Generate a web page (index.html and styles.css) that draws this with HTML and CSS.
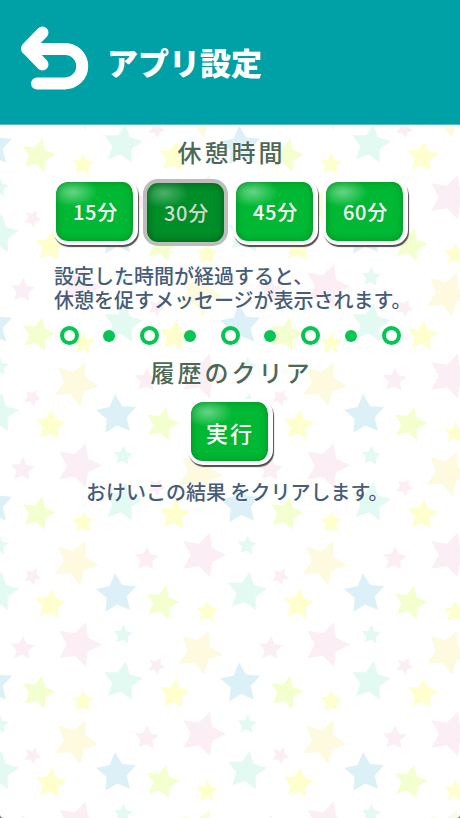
FILE: index.html
```
<!DOCTYPE html>
<html lang="ja">
<head>
    <meta charset="UTF-8">
    <title>アプリ設定</title>
    <link rel="stylesheet" href="styles.css">
</head>
<body>
    <div class="app">
        <svg class="wallpaper" width="460" height="818" aria-hidden="true">
            <defs>
                <path id="star" d="M0-1 .294-.405 .951-.309 .476.155 .588.809 0 .5-.588.809-.476.155-.951-.309-.294-.405Z"/>
                <g id="stars">
                    <use href="#star" fill="#e3faf3" transform="translate(122.5 144.5) rotate(9) scale(20.5)"/>
                    <use href="#star" fill="#ffffce" transform="translate(50.5 67.5) rotate(6) scale(16)"/>
                    <use href="#star" fill="#dcf0f8" transform="translate(116.5 57) rotate(-4) scale(21)"/>
                    <use href="#star" fill="#f4ffcf" transform="translate(162 66) rotate(14) scale(17.5)"/>
                    <use href="#star" fill="#ffffce" transform="translate(207 75) rotate(3) scale(11.5)"/>
                    <use href="#star" fill="#fbeef4" transform="translate(22.5 111.5) rotate(4) scale(12.5)"/>
                    <use href="#star" fill="#fbeef4" transform="translate(78.5 107.5) rotate(18) scale(23.5)"/>
                    <use href="#star" fill="#e3faf3" transform="translate(123 98) rotate(5) scale(10)"/>
                    <use href="#star" fill="#fefae0" transform="translate(199.5 115) rotate(25) scale(23.5)"/>
                    <use href="#star" fill="#fbeef4" transform="translate(156.5 129) rotate(28) scale(9)"/>
                </g>
                <g id="tile">
                    <use href="#stars"/>
                    <use href="#stars" x="124" y="89.5"/>
                    <use href="#stars" x="124" y="-89.5"/>
                    <use href="#stars" x="-124" y="89.5"/>
                    <use href="#stars" x="-124" y="-89.5"/>
                </g>
                <pattern id="starPattern" width="248" height="179" patternUnits="userSpaceOnUse">
                    <use href="#tile"/>
                </pattern>
            </defs>
            <rect width="460" height="818" fill="url(#starPattern)"/>
        </svg>

        <div class="screen">
            <header class="header">
                <svg class="back-icon" viewBox="0 0 70 66" fill="none" stroke="#fff" stroke-width="12" stroke-linecap="round" stroke-linejoin="round">
                    <path d="M22.5 6.5 7 22.5 22.5 38.5M7 23H45a17.2 17.2 0 0 1 0 34.4H17"/>
                </svg>
                <h1 class="title">アプリ設定</h1>
            </header>

            <section class="section">
                <h2 class="section-title">休憩時間</h2>
                <div class="button-row">
                    <button class="button">15分</button>
                    <button class="button selected">30分</button>
                    <button class="button">45分</button>
                    <button class="button">60分</button>
                </div>
                <p class="description">設定した時間が経過すると、<br>休憩を促すメッセージが表示されます。</p>
            </section>

            <div class="divider">
                <span class="ring"></span>
                <span class="dot"></span>
                <span class="ring"></span>
                <span class="dot"></span>
                <span class="ring"></span>
                <span class="dot"></span>
                <span class="ring"></span>
                <span class="dot"></span>
                <span class="ring"></span>
            </div>

            <section class="section">
                <h2 class="section-title">履歴のクリア</h2>
                <button class="button run">実行</button>
                <p class="description result">おけいこの結果 をクリアします。</p>
            </section>
        </div>
    </div>
</body>
</html>
```

FILE: styles.css
```
* {
    box-sizing: border-box;
}

body {
    margin: 0;
    background: #777;
    font-family: "Noto Sans CJK JP", sans-serif;
}

.app {
    display: grid;
    width: 460px;
    height: 818px;
    overflow: hidden;
    background: #fff;
    border-radius: 0 0 4px 4px;
}

/* wallpaper and screen share one cell */
.wallpaper,
.screen {
    grid-area: 1 / 1;
}

.screen {
    display: flex;
    flex-direction: column;
    z-index: 1;
}

.header {
    display: flex;
    align-items: center;
    height: 125px;
    padding: 0 20px 0 20px;
    background: #00a0a7;
    border-bottom: 1px solid #5cbcc3;
}

.back-icon {
    width: 70px;
    height: 66px;
    margin-top: -7px;
}

.title {
    margin: 0 0 0 17px;
    color: #fff;
    font-size: 31px;
    font-weight: 900;
    line-height: 40px;
}

.section {
    display: flex;
    flex-direction: column;
    align-items: center;
}

.section-title {
    margin: 9px 0 0;
    padding-left: 3px;
    color: #4d6856;
    font-size: 24px;
    font-weight: 500;
    line-height: 36px;
    letter-spacing: 3px;
    text-shadow: 0 0 2px #fff, 0 0 2px #fff;
}

.button-row {
    display: flex;
    gap: 5px;
    margin-top: 9px;
    padding-left: 1px;
}

.button {
    width: 85px;
    height: 66px;
    padding: 0 0 0 2px;
    border: solid #fff;
    border-width: 3px 5px 4px 3px;
    border-radius: 15px;
    background:
        radial-gradient(ellipse 25px 15px at 17px 10px, rgba(255, 255, 255, .4), rgba(255, 255, 255, 0)) padding-box,
        #00b833;
    box-shadow: 1px 2px 1px #514b50, inset 0 0 7px rgba(0, 100, 20, .5);
    color: #fff;
    font-family: inherit;
    font-size: 20px;
    font-weight: 500;
    line-height: 30px;
    letter-spacing: .8px;
}

.button.selected {
    border-color: #bdbdbd;
    border-width: 4px;
    height: 67px;
    background:
        radial-gradient(ellipse 25px 15px at 17px 10px, rgba(255, 255, 255, .3), rgba(255, 255, 255, 0)) padding-box,
        #008e28;
    box-shadow: inset 0 0 9px rgba(0, 70, 15, .7);
    color: #d0d8d0;
}

.button.run {
    margin-top: 9px;
    font-size: 22px;
    letter-spacing: 2px;
}

.description {
    width: 352px;
    margin: 18px 0 0;
    color: #465c78;
    font-size: 20px;
    font-weight: 500;
    line-height: 24px;
    white-space: nowrap;
    text-shadow: 0 0 2px #fff, 0 0 2px #fff;
}

.description.result {
    width: 288px;
    margin-top: 15px;
}

.divider {
    display: flex;
    align-items: center;
    justify-content: space-between;
    width: 341px;
    margin: 14px auto 0;
}

.ring {
    width: 19px;
    height: 19px;
    border: 4px solid #05c653;
    border-radius: 50%;
    background: #fff;
}

.dot {
    width: 12px;
    height: 12px;
    border-radius: 50%;
    background: #05c653;
}
```
